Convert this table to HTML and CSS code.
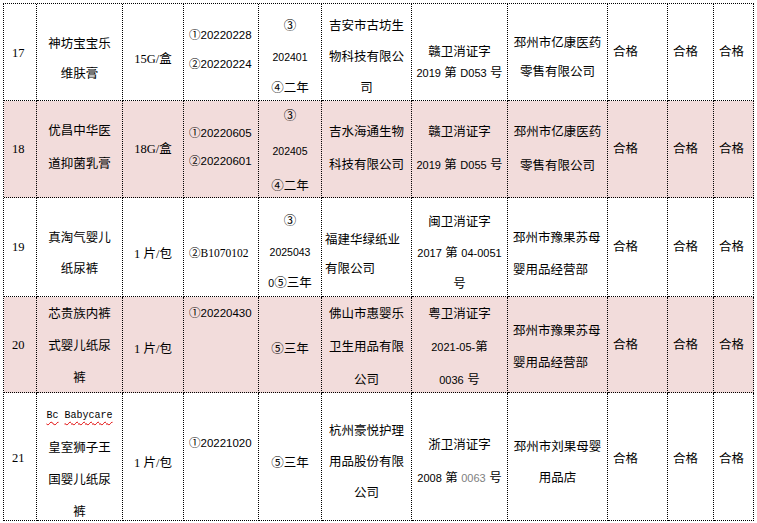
FILE: index.html
```html
<!DOCTYPE html>
<html lang="zh">
<head>
<meta charset="utf-8">
<title>抽检结果</title>
<link rel="stylesheet" href="styles.css">
</head>
<body>
<div class="sheet">
  <div class="row">
    <div class="cell n t2"><div>17</div></div>
    <div class="cell h30 t13"><div>神坊宝宝乐<br>维肤膏</div></div>
    <div class="cell sp t13"><div>15G/盒</div></div>
    <div class="cell bt h29 b4"><div>①20220228<br>②20220224</div></div>
    <div class="cell h31 t10"><div>③<br><span class="e">202401</span><br>④二年</div></div>
    <div class="cell h31 t10"><div>吉安市古坊生<br>物科技有限公<br>司</div></div>
    <div class="cell h21 t22"><div>赣卫消证字<br><span class="d">2019</span> 第 <span class="d">D053</span> 号</div></div>
    <div class="cell h29 t12"><div>邳州市亿康医药<br>零售有限公司</div></div>
    <div class="cell ok"><div>合格</div></div>
    <div class="cell ok"><div>合格</div></div>
    <div class="cell ok"><div>合格</div></div>
  </div>
  <div class="row pink">
    <div class="cell n"><div>18</div></div>
    <div class="cell h33 b2"><div>优昌中华医<br>道抑菌乳膏</div></div>
    <div class="cell sp"><div>18G/盒</div></div>
    <div class="cell bt h28 b5"><div>①20220605<br>②20220601</div></div>
    <div class="cell h35 t5"><div>③<br><span class="e">202405</span><br>④二年</div></div>
    <div class="cell h33"><div>吉水海通生物<br>科技有限公司</div></div>
    <div class="cell h33"><div>赣卫消证字<br><span class="d">2019</span> 第 <span class="d">D055</span> 号</div></div>
    <div class="cell h34"><div>邳州市亿康医药<br>零售有限公司</div></div>
    <div class="cell ok"><div>合格</div></div>
    <div class="cell ok"><div>合格</div></div>
    <div class="cell ok"><div>合格</div></div>
  </div>
  <div class="row">
    <div class="cell n"><div>19</div></div>
    <div class="cell h31 t14"><div>真淘气婴儿<br>纸尿裤</div></div>
    <div class="cell sp t13"><div>1 片/包</div></div>
    <div class="cell bt sp t11"><div>②B1070102</div></div>
    <div class="cell h31 t10"><div>③<br><span class="e">2025043</span><br><span class="e">0</span>⑤三年</div></div>
    <div class="cell lf pl3 h29 t16"><div>福建华绿纸业<br>有限公司</div></div>
    <div class="cell h31 t13"><div>闽卫消证字<br><span class="d">2017</span> 第 <span class="d">04-0051</span><br>号</div></div>
    <div class="cell lf h32 t13"><div>邳州市豫果苏母<br>婴用品经营部</div></div>
    <div class="cell ok"><div>合格</div></div>
    <div class="cell ok"><div>合格</div></div>
    <div class="cell ok"><div>合格</div></div>
  </div>
  <div class="row pink">
    <div class="cell n"><div>20</div></div>
    <div class="cell h32 t3"><div>芯贵族内裤<br>式婴儿纸尿<br>裤</div></div>
    <div class="cell sp t8"><div>1 片/包</div></div>
    <div class="cell bt top"><div>①20220430</div></div>
    <div class="cell t8"><div>⑤三年</div></div>
    <div class="cell h33 t5"><div>佛山市惠婴乐<br>卫生用品有限<br>公司</div></div>
    <div class="cell h33 t5"><div>粤卫消证字<br><span class="d">2021-05-</span>第<br><span class="d">0036</span> 号</div></div>
    <div class="cell lf h32 t4"><div>邳州市豫果苏母<br>婴用品经营部</div></div>
    <div class="cell ok"><div>合格</div></div>
    <div class="cell ok"><div>合格</div></div>
    <div class="cell ok"><div>合格</div></div>
  </div>
  <div class="row">
    <div class="cell n t2"><div>21</div></div>
    <div class="cell h32 t12"><div><span class="mono"><span class="wavy">Bc</span> <span class="wavy">Babycare</span></span><br>皇室狮子王<br>国婴儿纸尿<br>裤</div></div>
    <div class="cell sp t12"><div>1 片/包</div></div>
    <div class="cell bt b28"><div>①20221020</div></div>
    <div class="cell t12"><div>⑤三年</div></div>
    <div class="cell h31 t11"><div>杭州豪悦护理<br>用品股份有限<br>公司</div></div>
    <div class="cell h33 t11"><div>浙卫消证字<br><span class="d">2008</span> 第 <span class="d gray">0063</span> 号</div></div>
    <div class="cell h31 t13"><div>邳州市刘果母婴<br>用品店</div></div>
    <div class="cell ok t4"><div>合格</div></div>
    <div class="cell ok t4"><div>合格</div></div>
    <div class="cell ok t4"><div>合格</div></div>
  </div>
</div>
</body>
</html>
```

FILE: styles.css
```css
html, body {
  margin: 0;
  background: #fff;
}
body {
  font-family: "Liberation Sans", "Noto Sans CJK SC", sans-serif;
  font-size: 12.5px;
  color: #000;
}
.sheet {
  display: grid;
  grid-template-columns: 33px 86px 61px 75px 63px 90px 96px 100px 60px 46px 40px;
  grid-template-rows: 97px 97px 99px 96px 128px;
  width: max-content;
  margin: 3px 0 0 3px;
  border-top: 1px dotted #000;
  border-left: 1px dotted #000;
}
.row { display: contents; }
.cell {
  display: flex;
  flex-direction: column;
  justify-content: center;
  align-items: center;
  text-align: center;
  border-right: 1px dotted #000;
  border-bottom: 1px dotted #000;
  line-height: 32px;
  white-space: nowrap;
  min-width: 0;
  min-height: 0;
}
.cell > div { flex: none; }
.pink > .cell { background: #f2dcdb; }

.n {
  font-family: "Liberation Serif", "Noto Sans CJK SC", serif;
  align-items: flex-start;
  padding-left: 8px;
}
.sp { font-family: "Liberation Serif", "Noto Sans CJK SC", serif; }
.bt {
  font-size: 11.5px;
  align-items: flex-start;
  padding-left: 5px;
}
.ok {
  align-items: flex-start;
  padding-left: 5px;
}
.lf {
  align-items: flex-start;
  text-align: left;
  padding-left: 5px;
}
.pl3 { padding-left: 3px; }
.top { justify-content: flex-start; }

.d { font-size: 11px; }
.e { font-size: 10.5px; }
.gray { color: #808080; }
.mono {
  font-family: "Liberation Mono", monospace;
  font-size: 10px;
}
.wavy {
  text-decoration: underline wavy #e00000;
  text-decoration-thickness: 1px;
  text-underline-offset: 3px;
}

.h21 { line-height: 21px; }
.h28 { line-height: 28px; }
.h29 { line-height: 29px; }
.h30 { line-height: 30px; }
.h31 { line-height: 31px; }
.h32 { line-height: 32px; }
.h33 { line-height: 33px; }
.h34 { line-height: 34px; }
.h35 { line-height: 35px; }

.t2 { padding-top: 2px; }
.t3 { padding-top: 3px; }
.t4 { padding-top: 4px; }
.t5 { padding-top: 5px; }
.t8 { padding-top: 8px; }
.t10 { padding-top: 10px; }
.t11 { padding-top: 11px; }
.t12 { padding-top: 12px; }
.t13 { padding-top: 13px; }
.t14 { padding-top: 14px; }
.t16 { padding-top: 16px; }
.t22 { padding-top: 22px; }
.b2 { padding-bottom: 2px; }
.b4 { padding-bottom: 4px; }
.b5 { padding-bottom: 5px; }
.b28 { padding-bottom: 28px; }
```
